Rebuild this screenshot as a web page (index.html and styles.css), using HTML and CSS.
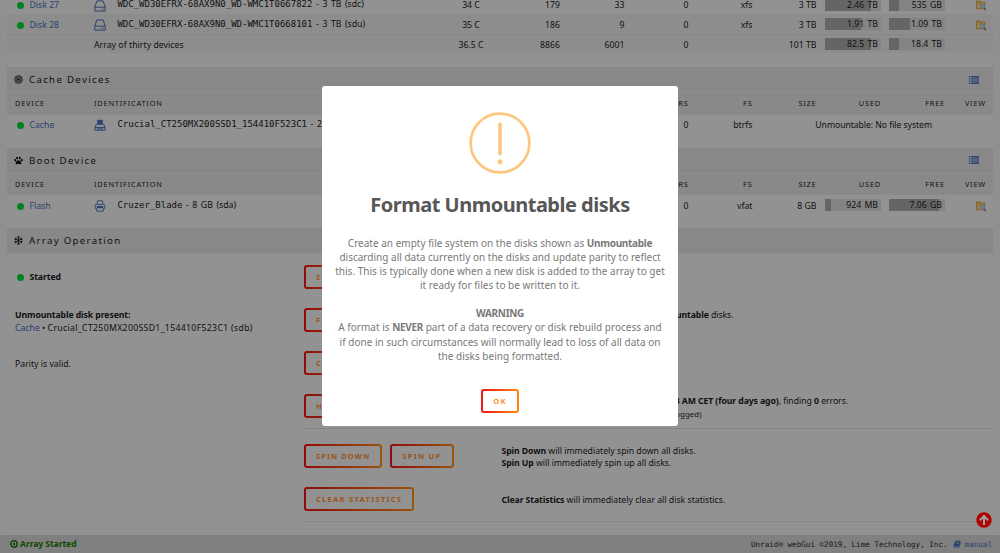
FILE: index.html
```html
<!DOCTYPE html>
<html lang="en">
<head>
    <meta charset="UTF-8">
    <meta name="viewport" content="width=device-width, initial-scale=1.0">
    <title>Main - Unraid</title>
    <link rel="stylesheet" href="styles.css">
</head>
<body>
    <svg class="symbols">
        <symbol id="hdd" viewBox="0 0 12 12">
            <path d="M.8 7.2 2.9.9h6.2l2.1 6.3v3.9H.8zM.8 7.2h10.4M7 9.2h.8M9 9.2h.8" fill="none" stroke="currentColor" stroke-width="1"/>
        </symbol>
        <symbol id="ssd" viewBox="0 0 12 12">
            <path d="M3.2.8h5.6v5H3.2z" fill="currentColor"/>
            <path d="M2.6 4.8.9 8.6v2.6h10.2V8.6L9.4 4.8M1 8.4h10M3 9.9h6" fill="none" stroke="currentColor" stroke-width="1"/>
        </symbol>
        <symbol id="usb" viewBox="0 0 12 12">
            <path d="M3 4.2 3.6.8h4.8l.6 3.4M1.3 7V5.400q0-1 1-1h7.400q1 0 1 1V7M1.300 7v1.600h1.400v2.600h6.600V8.600h1.400V7" fill="none" stroke="currentColor" stroke-width=".9"/>
            <path d="M2.800 6h6.400v2.200H2.800z" fill="currentColor"/>
        </symbol>
        <symbol id="browse" viewBox="0 0 12 12">
            <path d="M1 1.5h4l.8 1H10v7H1z" fill="#f0dca0" stroke="#e0a32c" stroke-width="1.1"/>
            <path d="M2.8 4.3h5.4" stroke="#e0a32c" stroke-width=".9"/>
            <circle cx="7.7" cy="7" r="2.3" fill="#b8d8f4" stroke="#9ab9dd" stroke-width=".9"/>
            <path d="m9.3 8.8 2 2.3" stroke="#806560" stroke-width="1.3"/>
        </symbol>
        <symbol id="list" viewBox="0 0 10 8">
            <path d="M0 .7h1.3M0 2.9h1.3M0 5.1h1.3M0 7.3h1.3M2 .7h8M2 2.9h8M2 5.1h8M2 7.3h8" stroke="currentColor" stroke-width="1.4"/>
        </symbol>
    </svg>

    <div class="page">
        <div class="devices array">
            <div class="row">
                <div class="device"><i class="orb"></i><a>Disk 27</a></div>
                <div class="ident"><svg><use href="#hdd"/></svg><span><tt>WDC_WD30EFRX-68AX9N0_WD-WMC1T0667822</tt> - 3 TB (sdc)</span></div>
                <div class="temp">34 C</div><div>179</div><div>33</div><div>0</div><div>xfs</div><div>3 TB</div>
                <div class="usage"><i style="width:82%"></i><span>2.46 TB</span></div>
                <div class="usage"><i style="width:18%"></i><span>535 GB</span></div>
                <div class="view"><svg><use href="#browse"/></svg></div>
            </div>
            <div class="row alt">
                <div class="device"><i class="orb"></i><a>Disk 28</a></div>
                <div class="ident"><svg><use href="#hdd"/></svg><span><tt>WDC_WD30EFRX-68AX9N0_WD-WMC1T0668101</tt> - 3 TB (sdu)</span></div>
                <div class="temp">35 C</div><div>186</div><div>9</div><div>0</div><div>xfs</div><div>3 TB</div>
                <div class="usage"><i style="width:64%"></i><span>1.91 TB</span></div>
                <div class="usage"><i style="width:37%"></i><span>1.09 TB</span></div>
                <div class="view"><svg><use href="#browse"/></svg></div>
            </div>
            <div class="row total">
                <div></div>
                <div class="label">Array of thirty devices</div>
                <div class="temp">36.5 C</div><div>8866</div><div>6001</div><div>0</div><div></div><div>101 TB</div>
                <div class="usage"><i style="width:82%"></i><span>82.5 TB</span></div>
                <div class="usage"><i style="width:18%"></i><span>18.4 TB</span></div>
                <div></div>
            </div>
        </div>

        <div class="title">
            <svg viewBox="0 0 10 10"><circle cx="5" cy="5" r="4.3" fill="none" stroke="#222" stroke-width="1"/><circle cx="5" cy="5" r="2.7" fill="none" stroke="#222" stroke-width="1"/><circle cx="5" cy="5" r="1.5" fill="#222"/></svg>
            <span>Cache Devices</span>
            <svg class="list"><use href="#list"/></svg>
        </div>
        <div class="devices">
            <div class="row head">
                <div class="device">Device</div><div class="ident">Identification</div><div></div><div></div><div></div><div>Errors</div><div>FS</div><div>Size</div><div>Used</div><div>Free</div><div class="view">View</div>
            </div>
            <div class="row">
                <div class="device"><i class="orb"></i><a>Cache</a></div>
                <div class="ident"><svg><use href="#ssd"/></svg><span><tt>Crucial_CT250MX200SSD1_154410F523C1</tt> - 250 GB</span></div>
                <div></div><div></div><div></div><div>0</div><div>btrfs</div>
                <div class="unmountable">Unmountable: No file system</div>
            </div>
        </div>

        <div class="title">
            <svg viewBox="0 0 10 10" fill="#111"><ellipse cx="1.4" cy="4.7" rx="1.1" ry="1.5" transform="rotate(-20 1.4 4.7)"/><ellipse cx="3.5" cy="2.3" rx="1.1" ry="1.6"/><ellipse cx="6.5" cy="2.3" rx="1.1" ry="1.6"/><ellipse cx="8.6" cy="4.7" rx="1.1" ry="1.5" transform="rotate(20 8.6 4.7)"/><path d="M5 4.6c1.5 0 3.2 2.2 3.2 3.6 0 1.6-2 .8-3.2.8s-3.2.8-3.2-.8C1.8 6.8 3.5 4.6 5 4.6z"/></svg>
            <span>Boot Device</span>
            <svg class="list"><use href="#list"/></svg>
        </div>
        <div class="devices">
            <div class="row head">
                <div class="device">Device</div><div class="ident">Identification</div><div></div><div></div><div></div><div>Errors</div><div>FS</div><div>Size</div><div>Used</div><div>Free</div><div class="view">View</div>
            </div>
            <div class="row">
                <div class="device"><i class="orb"></i><a>Flash</a></div>
                <div class="ident"><svg><use href="#usb"/></svg><span><tt>Cruzer_Blade</tt> - 8 GB (sda)</span></div>
                <div></div><div></div><div></div><div>0</div><div>vfat</div><div>8 GB</div>
                <div class="usage"><i style="width:11%"></i><span>924 MB</span></div>
                <div class="usage"><i style="width:89%"></i><span>7.06 GB</span></div>
                <div class="view"><svg><use href="#browse"/></svg></div>
            </div>
        </div>

        <div class="title">
            <svg viewBox="0 0 10 10"><path d="M5 .3v9.4M1 2.7l8 4.6M9 2.7 1 7.3M3.6 1 5 2.3 6.4 1M3.6 9 5 7.7 6.4 9M.6 4.2l1.8-.5L2 1.8M9.4 5.8l-1.8.5.4 1.9M9.400 4.200l-1.800-.5.400-1.900M.6 5.800l1.800.5L2 8.200" fill="none" stroke="#111" stroke-width="1"/></svg>
            <span>Array Operation</span>
        </div>
        <div class="operation">
            <div class="op">
                <div class="status"><i class="orb"></i><b>Started</b></div>
                <div class="buttons"><button>Stop</button></div>
                <div></div>
            </div>
            <div class="op">
                <div><b>Unmountable disk present:</b><br><a>Cache</a> &bull; <span class="serial">Crucial_CT250MX200SSD1_154410F523C1 (sdb)</span></div>
                <div class="buttons"><button>Format</button></div>
                <div class="format"><b>Format</b> will create a file system in all <b>Unmountable</b> disks.<br>&nbsp;</div>
            </div>
            <div class="op">
                <div>Parity is valid.</div>
                <div class="buttons"><button>Check</button></div>
                <div></div>
            </div>
            <div class="op">
                <div></div>
                <div class="buttons"><button>History</button></div>
                <div class="history">Last check done on <b>Fri 06 Dec 2019 03:48:53 AM CET (four days ago)</b>, finding <b>0</b> errors.<br><small>Duration: 9 hours, 12 minutes (average speed logged)</small></div>
            </div>
            <div class="op ruled">
                <div></div>
                <div class="buttons"><button class="spin">Spin Down</button><button>Spin Up</button></div>
                <div><b>Spin Down</b> will immediately spin down all disks.<br><b>Spin Up</b> will immediately spin up all disks.</div>
            </div>
            <div class="op">
                <div></div>
                <div class="buttons"><button>Clear Statistics</button></div>
                <div><b>Clear Statistics</b> will immediately clear all disk statistics.</div>
            </div>
            <div class="op ruled last"></div>
        </div>
    </div>

    <div class="footer">
        <svg viewBox="0 0 10 10"><circle cx="5" cy="5" r="4" fill="none" stroke="currentColor" stroke-width="1.8"/><path d="M3.8 2.8v4.4L7.3 5z" fill="currentColor"/></svg>
        <span class="started">Array Started</span>
        <span class="copy">Unraid® webGui ©2019, Lime Technology, Inc.</span>
        <a><svg viewBox="0 0 10 10"><path d="M3 .8h6.6L7.7 8H1.200Q.2 7.600.6 6.800z" fill="currentColor"/><path d="M4 2.7h4M3.6 4.2h3.900" stroke="#d4d6d4" stroke-width=".6"/><path d="M1 9.200h6.700L9.800 2.500" fill="none" stroke="currentColor" stroke-width=".8"/></svg>manual</a>
    </div>

    <div class="overlay"></div>

    <svg class="top" viewBox="0 0 16 16"><circle cx="8" cy="8" r="7.7" fill="#b00000"/><path d="M8 13V4M3.9 8.200 8 4.100l4.100 4.100" fill="none" stroke="#a0a0a0" stroke-width="2.100"/></svg>

    <div class="modal">
        <svg class="warning" viewBox="0 0 62 62"><circle cx="31" cy="31" r="29.4" fill="none" stroke="#fdc77f" stroke-width="2.7"/><rect x="29.3" y="10.5" width="3.5" height="33" rx="1.7" fill="#fdc77f"/><circle cx="31.1" cy="49.7" r="2.5" fill="#fdc77f"/></svg>
        <h2>Format Unmountable disks</h2>
        <p>Create an empty file system on the disks shown as <b>Unmountable</b><br>
            discarding all data currently on the disks and update parity to reflect<br>
            this. This is typically done when a new disk is added to the array to get<br>
            it ready for files to be written to it.</p>
        <p><b>WARNING</b><br>
            A format is <b>NEVER</b> part of a data recovery or disk rebuild process and<br>
            if done in such circumstances will normally lead to loss of all data on<br>
            the disks being formatted.</p>
        <button>OK</button>
    </div>
</body>
</html>
```
FILE: styles.css
```css
* {
    box-sizing: border-box;
}
body {
    margin: 0;
    height: 553px;
    overflow: hidden;
    background: #f0f0f0;
    color: #1c1b1b;
    font: 8.7px/13px "Noto Sans", sans-serif;
}
a {
    color: #486dba;
}
.symbols {
    display: none;
}
.page {
    margin: 0 7px;
    background: #f4f4f4;
    height: 535px;
    overflow: hidden;
}
.devices {
    margin-bottom: 13.6px;
}
.devices.array {
    margin-top: -5.3px;
}
.row {
    display: grid;
    grid-template-columns: 87px 327px 100px 39px 64.5px 64px 64px 64px 64.5px 64px 41px;
    height: 19.6px;
    align-items: center;
    text-align: right;
    white-space: nowrap;
}
.row > div {
    padding-top: 2px;
}
.row.alt, .row.total {
    background: #ececec;
}
.row.total {
    border-top: 1px solid #e2e2e2;
}
.row .device {
    text-align: left;
    padding-left: 8px;
}
.orb {
    display: inline-block;
    width: 7px;
    height: 7px;
    border-radius: 50%;
    background: #00d936;
    margin: 0 5.5px 0 2px;
    vertical-align: -1px;
}
.row .label {
    text-align: left;
    letter-spacing: 0.04px;
}
.row .ident {
    display: flex;
    align-items: center;
    gap: 11.4px;
    padding-top: 0;
    text-align: left;
    word-spacing: 1.3px;
}
.ident svg {
    width: 12px;
    height: 12px;
    position: relative;
    top: 1px;
    color: #486dba;
}
tt {
    font: 9px "DejaVu Sans Mono", monospace;
}
.row .temp {
    text-align: center;
}
.row .usage {
    display: flex;
    justify-content: flex-end;
    position: relative;
    width: 56px;
    height: 12px;
    margin-left: auto;
    padding: 0 3px 0 0;
    line-height: 12px;
    word-spacing: 1px;
    background: #dcdcdc;
}
.usage i {
    position: absolute;
    left: 0;
    top: 0;
    height: 12px;
    background: #a9a9a9;
}
.usage span {
    position: relative;
}
.row .view svg {
    display: block;
    width: 12px;
    height: 11px;
    margin-left: auto;
    margin-right: -1px;
}
.row .unmountable {
    grid-column: 8 / 11;
    padding-right: 13px;
    letter-spacing: -0.07px;
}
.row.head {
    height: 21.5px;
    background: #e5e5e5;
    font-size: 7.4px;
    text-transform: uppercase;
    letter-spacing: 0.8px;
}
.row.head > div {
    padding-top: 0;
}
.title {
    display: flex;
    align-items: center;
    height: 26px;
    padding: 0 14px 0 7px;
    background: #e3e3e3;
    border-bottom: 1px solid #f0f0f0;
    font-size: 9.7px;
    letter-spacing: 1.3px;
}
.title svg {
    width: 9px;
    height: 9px;
    margin-right: 6px;
}
.title .list {
    width: 10px;
    height: 8px;
    margin: 0 0 0 auto;
    color: #486dba;
}
.operation {
    padding-top: 1px;
}
.op {
    display: grid;
    grid-template-columns: 289px 197.5px 1fr;
    height: 43.1px;
    padding-left: 8px;
    align-items: center;
    line-height: 12.6px;
    white-space: nowrap;
}
.op > div {
    padding-top: 3px;
}
.op .status {
    padding-top: 1px;
}
.op .buttons {
    padding-top: 0;
}
.op b {
    letter-spacing: -0.1px;
}
.serial {
    letter-spacing: 0.33px;
}
.format {
    letter-spacing: -0.07px;
}
.history {
    letter-spacing: -0.04px;
}
.history small {
    font-size: 7.8px;
    letter-spacing: 0.06px;
}
.op.ruled {
    height: 49.6px;
    padding-top: 5px;
    border-top: 1px solid #dedede;
    margin-left: 296px;
    padding-left: 1px;
    grid-template-columns: 0 197.5px 1fr;
}
.op.ruled.last {
    height: 20px;
}
button {
    height: 24px;
    margin-right: 8px;
    padding: 0 10px;
    border: 2px solid transparent;
    border-radius: 3px;
    background: linear-gradient(#f4f4f4, #f4f4f4) padding-box, linear-gradient(90deg, #f01414, #ff8c14) border-box;
    color: #ff8c2f;
    font: bold 7.5px "Noto Sans", sans-serif;
    letter-spacing: 1.3px;
    text-transform: uppercase;
}
button.spin {
    letter-spacing: 1.1px;
}
.footer {
    display: flex;
    align-items: center;
    height: 18px;
    padding: 0 8px 0 10px;
    background: #d4d6d4;
    font: 7.6px "DejaVu Sans Mono", monospace;
    color: #2b2a29;
}
.footer svg {
    width: 8px;
    height: 8px;
    color: #1c7a00;
}
.footer .started {
    margin-left: 2px;
    color: #1c7a00;
    font: bold 8.7px "Noto Sans", sans-serif;
    letter-spacing: -0.12px;
}
.footer .copy {
    margin-left: auto;
    margin-right: 5px;
}
.footer a svg {
    color: #486dba;
    margin-right: 4px;
    vertical-align: -1px;
}
.overlay {
    position: fixed;
    inset: 0;
    background: rgba(0, 0, 0, 0.4);
}
.top {
    position: fixed;
    right: 8px;
    bottom: 25px;
    width: 16px;
    height: 16px;
}
.modal {
    position: fixed;
    left: 322px;
    top: 86px;
    width: 356px;
    height: 340px;
    padding-top: 26px;
    border-radius: 3px;
    background: #fff;
    text-align: center;
    color: #797979;
    white-space: nowrap;
}
.warning {
    display: block;
    width: 62px;
    height: 62px;
    margin: 0 auto;
}
.modal h2 {
    margin: 17px 0;
    color: #575757;
    font-size: 20px;
    line-height: 28px;
    letter-spacing: -0.5px;
}
.modal p {
    margin: 0 0 14px;
    font-size: 10px;
    line-height: 14.1px;
    letter-spacing: 0.01px;
}
.modal p b {
    letter-spacing: -0.3px;
}
.modal button {
    margin: 12px 0 0;
    background: linear-gradient(#fff, #fff) padding-box, linear-gradient(90deg, #f01414, #ff8c14) border-box;
}
```
